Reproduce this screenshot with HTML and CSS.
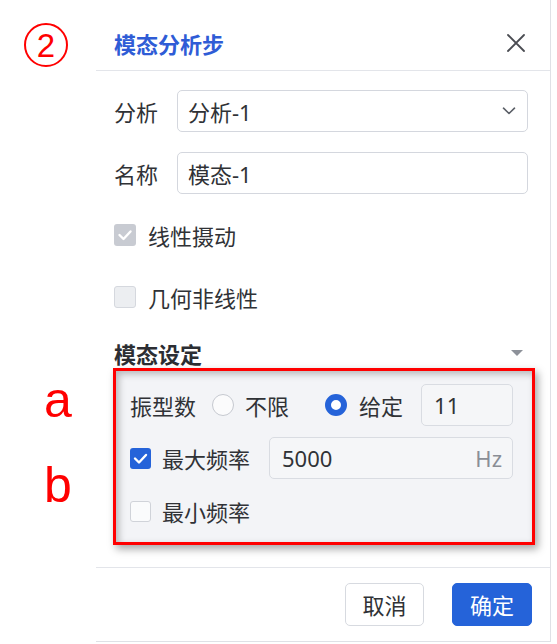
FILE: index.html
```html
<!DOCTYPE html>
<html lang="zh">
<head>
<meta charset="utf-8">
<title>模态分析步</title>
<link rel="stylesheet" href="styles.css">
</head>
<body>
<div class="mark-circle"><span>2</span></div>
<div class="mark-letter mark-a">a</div>
<div class="mark-letter mark-b">b</div>

<div class="panel">
  <div class="header">
    <div class="title">模态分析步</div>
    <svg class="close" width="20" height="20" viewBox="0 0 20 20"><path d="M2 2 L18 18 M18 2 L2 18" stroke="#4a4c52" stroke-width="1.8" fill="none" stroke-linecap="round"/></svg>
  </div>
  <div class="body">
    <div class="field">
      <span class="label">分析</span>
      <div class="control select">
        <span>分析-1</span>
        <svg width="14" height="8" viewBox="0 0 14 8"><path d="M1.5 1.2 L7 6.5 L12.5 1.2" stroke="#5b5f67" stroke-width="1.6" fill="none" stroke-linecap="round" stroke-linejoin="round"/></svg>
      </div>
    </div>
    <div class="field">
      <span class="label">名称</span>
      <div class="control"><span>模态-1</span></div>
    </div>
    <div class="check-row">
      <span class="box box-disabled-on"><svg width="22" height="22" viewBox="0 0 22 22"><path d="M5.5 11 L9.5 15 L16.5 7.5" stroke="#fff" stroke-width="2.4" fill="none" stroke-linecap="round" stroke-linejoin="round"/></svg></span>
      <span class="text">线性摄动</span>
    </div>
    <div class="check-row">
      <span class="box box-disabled-off"></span>
      <span class="text">几何非线性</span>
    </div>
    <div class="section">
      <span class="section-title">模态设定</span>
      <span class="tri"></span>
    </div>
    <div class="card">
      <div class="crow">
        <span class="text">振型数</span>
        <span class="radio radio-off"></span>
        <span class="text">不限</span>
        <span class="radio radio-on"></span>
        <span class="text">给定</span>
        <div class="cinput count"><span>11</span></div>
      </div>
      <div class="crow">
        <span class="box box-on"><svg width="21" height="21" viewBox="0 0 21 21"><path d="M5 10.5 L9 14.5 L16 7" stroke="#fff" stroke-width="2.4" fill="none" stroke-linecap="round" stroke-linejoin="round"/></svg></span>
        <span class="text">最大频率</span>
        <div class="cinput freq"><span>5000</span><span class="unit">Hz</span></div>
      </div>
      <div class="crow">
        <span class="box box-off"></span>
        <span class="text">最小频率</span>
      </div>
    </div>
  </div>
  <div class="footer">
    <button class="btn btn-cancel">取消</button>
    <button class="btn btn-ok">确定</button>
  </div>
</div>
</body>
</html>
```
FILE: styles.css
```css
* { box-sizing: border-box; margin: 0; padding: 0; }

body {
  margin: 0;
  width: 557px;
  height: 644px;
  position: relative;
  overflow: hidden;
  background: #ffffff;
  font-family: "Noto Sans", "Noto Sans CJK SC", sans-serif;
  color: #303236;
  font-size: 22px;
}

/* annotations */
.mark-circle {
  position: absolute;
  left: 24px;
  top: 23px;
  width: 44px;
  height: 44px;
  border: 2.5px solid #ff0000;
  border-radius: 50%;
  display: flex;
  align-items: center;
  justify-content: center;
}
.mark-circle span {
  color: #ff0000;
  font-family: "Liberation Sans", sans-serif;
  font-size: 33px;
  font-weight: 400;
  line-height: 1;
  margin-top: 1px;
}
.mark-letter {
  position: absolute;
  left: 44px;
  color: #ff0000;
  font-family: "Liberation Sans", sans-serif;
  font-size: 50px;
  line-height: 1;
}
.mark-a { top: 375px; }
.mark-b { top: 460px; }

/* panel */
.panel {
  margin-left: 96px;
  width: 455px;
  height: 642px;
  border-right: 1px solid #dfe1e6;
  border-bottom: 1px solid #dfe1e6;
  display: flex;
  flex-direction: column;
}

.header {
  height: 71px;
  padding: 16px 24px 0 18px;
  border-bottom: 1px solid #e3e5ea;
  display: flex;
  align-items: center;
  justify-content: space-between;
}
.title {
  color: #2f5cd6;
  font-weight: 700;
  font-size: 22px;
}
.close { display: block; }

.body {
  padding: 19px 22px 0 18px;
  display: flex;
  flex-direction: column;
}

.field {
  display: flex;
  align-items: center;
  height: 42px;
  margin-bottom: 20px;
}
.label { width: 63px; }
.control {
  flex: 1;
  height: 42px;
  border: 1px solid #d4d7de;
  border-radius: 5px;
  padding: 0 11px 0 10px;
  display: flex;
  align-items: center;
  justify-content: space-between;
  color: #303236;
}

.check-row {
  display: flex;
  align-items: center;
  height: 42px;
  margin-bottom: 20px;
}
.box {
  width: 22px;
  height: 22px;
  border-radius: 3px;
  margin-right: 12px;
  display: flex;
  align-items: center;
  justify-content: center;
  flex: none;
}
.box-disabled-on { background: #c8cbd2; }
.box-disabled-off { background: #eceef1; border: 1px solid #d5d8de; }

.section {
  height: 30px;
  display: flex;
  align-items: center;
  justify-content: space-between;
  padding-right: 5px;
}
.section-title { font-weight: 700; color: #2c2e33; }
.tri {
  width: 0;
  height: 0;
  border-left: 6px solid transparent;
  border-right: 6px solid transparent;
  border-top: 6px solid #8d9199;
}

.card {
  margin: 0 -7px 0 -1px;
  height: 177px;
  border: 3px solid #ff0000;
  background: #f3f4f7;
  padding: 13px 19px 10px 14px;
  box-shadow: inset 3px 3px 7px rgba(0, 0, 0, 0.25), 3px 4px 8px rgba(0, 0, 0, 0.35);
  display: flex;
  flex-direction: column;
  gap: 11px;
}
.crow {
  display: flex;
  align-items: center;
  height: 42px;
}
.radio {
  width: 22px;
  height: 22px;
  border-radius: 50%;
  flex: none;
}
.radio-off {
  border: 1.5px solid #c6c9d0;
  background: #fbfbfc;
  margin: 0 11px 0 16px;
}
.radio-on {
  border: 6.5px solid #2563d9;
  background: #ffffff;
  margin: 0 12px 0 36px;
}
.cinput {
  height: 42px;
  border: 1px solid #d9dce2;
  border-radius: 5px;
  background: #f5f6f8;
  display: flex;
  align-items: center;
  justify-content: space-between;
  padding: 0 10px 0 12px;
  color: #303236;
}
.count { margin-left: 18px; flex: 1; }
.freq { margin-left: 19px; flex: 1; }
.unit { color: #8a8e96; }

.box-on { width: 21px; height: 21px; background: #2563d9; margin-right: 11px; }
.box-off { width: 21px; height: 21px; background: #fafbfc; border: 1px solid #d0d3d9; margin-right: 11px; }

.footer {
  margin-top: auto;
  border-top: 1px solid #e3e5ea;
  padding: 15px 18px 15px 0;
  display: flex;
  justify-content: flex-end;
  gap: 28px;
}
.btn {
  height: 43px;
  width: 80px;
  border-radius: 5px;
  font-family: "Noto Sans", "Noto Sans CJK SC", sans-serif;
  font-size: 22px;
  line-height: 1;
}
.btn-cancel {
  width: 79px;
  background: #ffffff;
  border: 1px solid #d7dae0;
  color: #303236;
}
.btn-ok {
  background: #2563d9;
  border: 1px solid #2563d9;
  color: #ffffff;
}
```
